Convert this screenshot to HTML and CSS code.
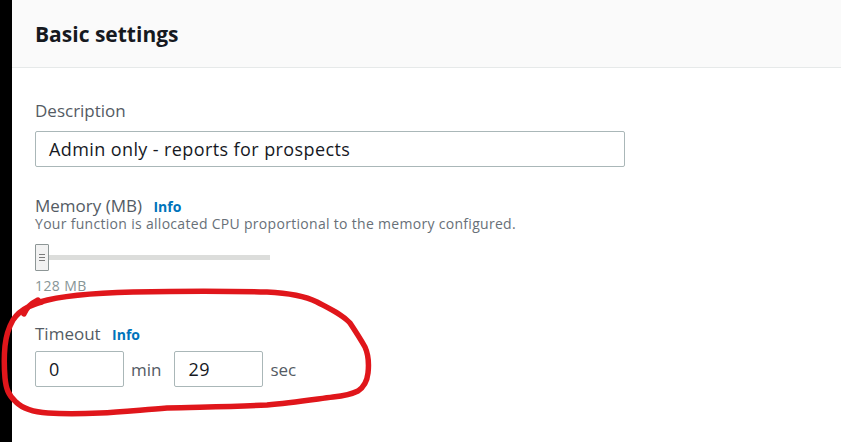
FILE: index.html
```html
<!DOCTYPE html>
<html>
<head>
<meta charset="utf-8">
<link rel="stylesheet" href="styles.css">
</head>
<body>
<div class="page">
  <div class="strip"></div>
  <div class="panel">
    <div class="header"><h2 class="title">Basic settings</h2></div>
    <div class="content">
      <div class="field">
        <div class="label">Description</div>
        <div class="input wide">Admin only - reports for prospects</div>
      </div>
      <div class="field mem">
        <div class="label">Memory (MB) <span class="info">Info</span></div>
        <div class="hint">Your function is allocated CPU proportional to the memory configured.</div>
        <div class="slider"><div class="track"></div><div class="thumb"><span></span><span></span><span></span></div></div>
        <div class="value">128 MB</div>
      </div>
      <div class="field timeout">
        <div class="label">Timeout <span class="info">Info</span></div>
        <div class="row">
          <div class="input small">0</div><span class="unit">min</span>
          <div class="input small">29</div><span class="unit">sec</span>
        </div>
      </div>
    </div>
  </div>
  <svg class="scribble" width="841" height="442" viewBox="0 0 841 442">
    <path d="M38 300 C30 304 26 308 24 314 M40 302 C60 296 90 293 133 292 C180 291 230 291 267 292 C290 293 305 296 317 302 C332 310 343 315 350 323 C356 332 361 340 365 347 C369 356 369 364 368 373 C367 382 364 387 358 391 C350 395 342 396 333 397 C310 400 290 403 267 405 C230 407 200 407 167 408 C140 410 120 412 100 413 C80 414 62 414 48 413 C32 412 22 408 16 402 C8 395 6 388 5 378 C4 366 4 356 5 346 C6 336 9 327 13 320 C17 314 22 310 28 307 C33 305 37 303 42 302" fill="none" stroke="#e0161b" stroke-width="5.5" stroke-linecap="round" stroke-linejoin="round"/>
  </svg>
</div>
</body>
</html>
```
FILE: styles.css
```css
html, body {
  margin: 0;
  padding: 0;
  background: #fff;
}
.page {
  position: relative;
  display: flex;
  width: 841px;
  height: 442px;
  overflow: hidden;
  font-family: "Open Sans", "Noto Sans", sans-serif;
}
.strip {
  width: 12px;
  background: #000;
  flex: none;
}
.panel {
  flex: 1;
  display: flex;
  flex-direction: column;
}
.header {
  height: 68px;
  background: #fafafa;
  border-bottom: 1px solid #e6e9e9;
  padding-left: 23px;
  display: flex;
  align-items: center;
  box-sizing: border-box;
}
.title {
  margin: 0;
  font-size: 21px;
  font-weight: 700;
  color: #16191f;
  line-height: 24px;
}
.content {
  padding: 33px 0 0 23px;
  display: flex;
  flex-direction: column;
}
.label {
  font-size: 17px;
  line-height: 20px;
  color: #545b64;
}
.info {
  font-size: 14px;
  font-weight: 700;
  color: #0073bb;
  margin-left: 7px;
}
.input {
  box-sizing: border-box;
  height: 36px;
  border: 1px solid #aab7b8;
  border-radius: 2px;
  background: #fff;
  color: #16191f;
  font-size: 18px;
  letter-spacing: 0.4px;
  line-height: 34px;
  padding-left: 13px;
}
.wide {
  width: 590px;
  margin-top: 10px;
}
.mem {
  margin-top: 31px;
}
.mem .label {
  line-height: 16px;
}
.hint {
  font-size: 14px;
  letter-spacing: 0.3px;
  line-height: 16px;
  color: #687078;
  margin-top: 1px;
}
.slider {
  position: relative;
  width: 235px;
  height: 27px;
  margin-top: 12px;
  display: flex;
  align-items: center;
}
.track {
  width: 100%;
  height: 5px;
  background: #dcdddb;
}
.thumb {
  position: absolute;
  left: 0;
  top: 0;
  width: 12px;
  height: 25px;
  background: #f2f2f2;
  border: 1px solid #8d9696;
  border-radius: 1px;
  display: flex;
  flex-direction: column;
  justify-content: center;
  align-items: center;
  gap: 2px;
}
.thumb span {
  width: 6px;
  height: 1px;
  background: #7a7a7a;
}
.value {
  font-size: 14px;
  letter-spacing: 0.4px;
  line-height: 16px;
  color: #879596;
  margin-top: 7px;
}
.timeout {
  margin-top: 30px;
}
.row {
  display: flex;
  align-items: center;
  margin-top: 6px;
}
.small {
  width: 89px;
}
.unit {
  font-size: 17px;
  color: #545b64;
  margin: 0 13px 0 7px;
}
.scribble {
  position: absolute;
  left: 0;
  top: 0;
  pointer-events: none;
}
```
